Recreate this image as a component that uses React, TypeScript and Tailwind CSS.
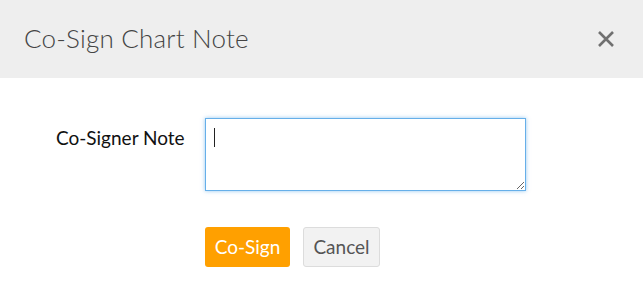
export default function App() {
  return (
    <div className="w-[643px] h-[291px] bg-white font-['Lato','Noto_Sans',sans-serif]">
      {/* Header */}
      <div className="h-[78px] bg-[#eeeeee] flex items-center justify-between pl-6 pr-[28px]">
        <h2 className="text-[26px] font-light text-[#444] tracking-[0.2px] pb-[1px]">Co-Sign Chart Note</h2>
        <button className="text-[#707070]">
          <svg width="18" height="18" viewBox="0 0 18 18">
            <path d="M2 2 L16 16 M16 2 L2 16" stroke="currentColor" strokeWidth="2.6" />
          </svg>
        </button>
      </div>

      {/* Body */}
      <div className="pt-[40px] flex">
        <label className="w-[205px] pl-[56px] pt-[6px] text-[19px] font-normal text-[#111]">Co-Signer Note</label>
        <div className="relative">
          <textarea
            className="block w-[321px] h-[73px] border border-[#66afe9] shadow-[0_0_4px_rgba(102,175,233,0.7)] outline-none resize-y px-2 py-1"
            defaultValue=""
          />
          <span className="absolute left-[9px] top-[10px] w-[1px] h-[19px] bg-[#222]" />
        </div>
      </div>

      <div className="pl-[205px] pt-[36px] flex gap-[13px]">
        <button className="h-[40px] w-[85px] rounded-[3px] bg-[#ffa000] text-white text-[19px]">Co-Sign</button>
        <button className="h-[40px] w-[77px] rounded-[3px] bg-[#f2f2f2] border border-[#dcdcdc] text-[#555] text-[19px]">Cancel</button>
      </div>
    </div>
  );
}
